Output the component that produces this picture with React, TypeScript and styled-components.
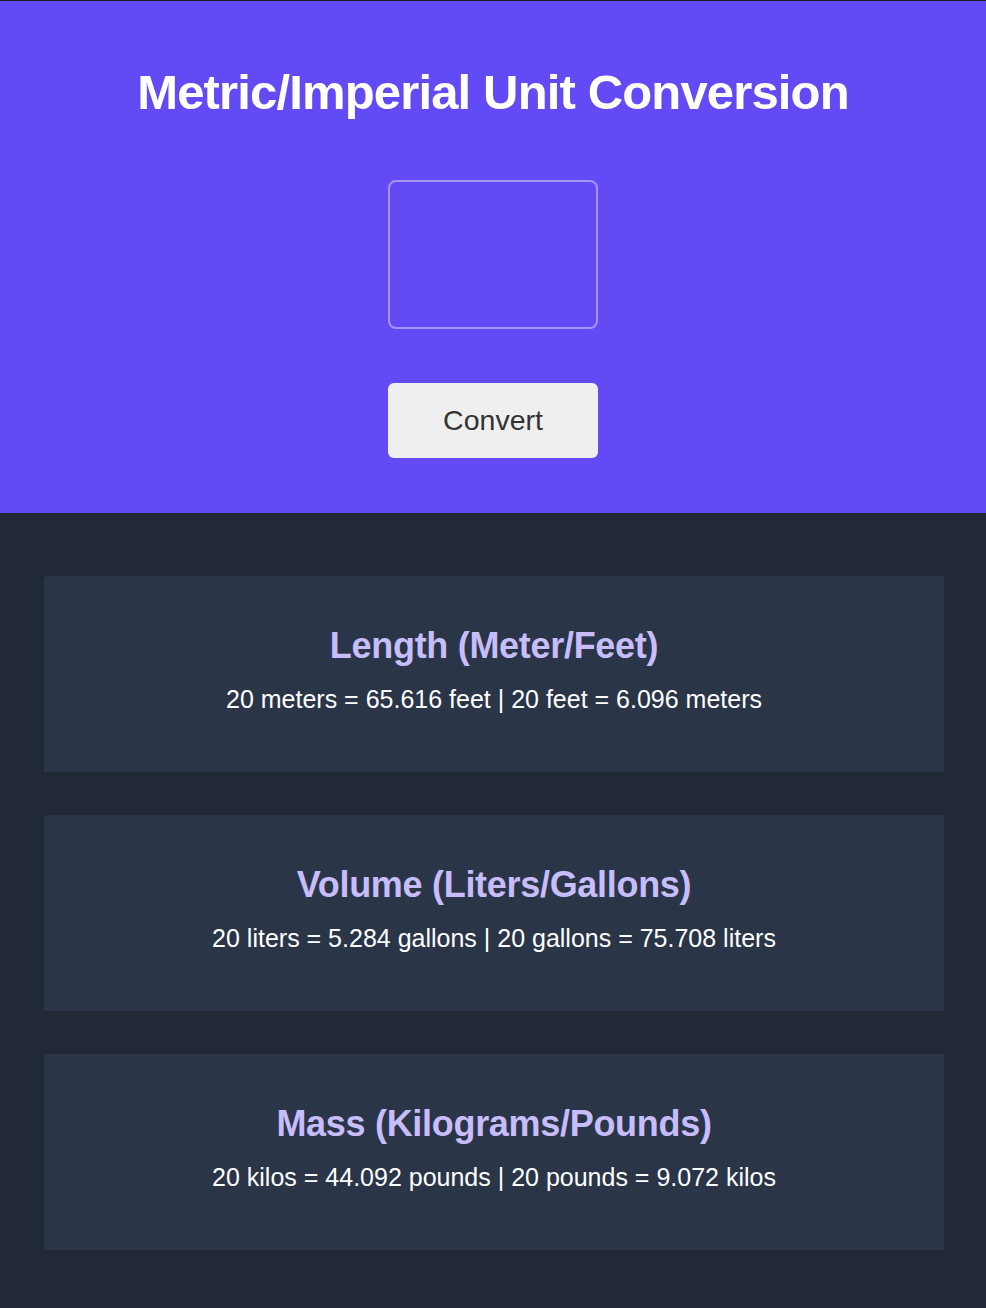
import React, { useState } from "react";
import styled, { createGlobalStyle } from "styled-components";

const GlobalStyle = createGlobalStyle`
  html, body {
    margin: 0;
    padding: 0;
    background: #212936;
    font-family: "Liberation Sans", Arial, sans-serif;
  }
`;

const Page = styled.div`
  min-height: 1308px;
  display: flex;
  flex-direction: column;
  border-top: 1px solid #1c1c24;
  background: #212936;
`;

const Header = styled.header`
  background: #624bf4;
  height: 512px;
  display: flex;
  flex-direction: column;
  align-items: center;
  box-sizing: border-box;
  padding-top: 60px;
`;

const Title = styled.h1`
  margin: 0;
  color: #ffffff;
  font-size: 49px;
  font-weight: 700;
  letter-spacing: -0.85px;
  line-height: 62px;
`;

const NumberInput = styled.input`
  margin-top: 57px;
  width: 210px;
  height: 149px;
  box-sizing: border-box;
  background: transparent;
  border: 2px solid #a893f9;
  border-radius: 8px;
  outline: none;
  color: #fff;
  font-size: 40px;
  text-align: center;
  font-family: inherit;
`;

const ConvertButton = styled.button`
  margin-top: 54px;
  width: 210px;
  height: 75px;
  border: none;
  border-radius: 6px;
  background: #efefef;
  color: #333333;
  font-family: "Liberation Sans", Arial, sans-serif;
  font-size: 28.5px;
  cursor: pointer;
`;

const Results = styled.main`
  display: flex;
  flex-direction: column;
  gap: 43px;
  padding: 63px 42px 0 44px;
`;

const Card = styled.section`
  background: #2b3548;
  height: 196px;
  border-top-left-radius: 4px;
  display: flex;
  flex-direction: column;
  align-items: center;
  box-sizing: border-box;
  padding-top: 48px;
`;

const CardTitle = styled.h2`
  margin: 0;
  color: #c8bdfb;
  font-size: 36px;
  font-weight: 700;
  letter-spacing: -0.3px;
  line-height: 44px;
`;

const CardText = styled.p`
  margin: 16px 0 0;
  color: #ffffff;
  font-size: 25px;
  letter-spacing: 0;
  line-height: 30px;
`;

const fmt = (n: number) => n.toFixed(3);

export default function App() {
  const [value, setValue] = useState("");
  const [num, setNum] = useState(20);

  const sections = [
    {
      title: "Length (Meter/Feet)",
      text: `${num} meters = ${fmt(num * 3.2808)} feet | ${num} feet = ${fmt(num * 0.3048)} meters`,
    },
    {
      title: "Volume (Liters/Gallons)",
      text: `${num} liters = ${fmt(num * 0.2642)} gallons | ${num} gallons = ${fmt(num * 3.7854)} liters`,
    },
    {
      title: "Mass (Kilograms/Pounds)",
      text: `${num} kilos = ${fmt(num * 2.2046)} pounds | ${num} pounds = ${fmt(num * 0.4536)} kilos`,
    },
  ];

  return (
    <Page>
      <GlobalStyle />
      <Header>
        <Title>Metric/Imperial Unit Conversion</Title>
        <NumberInput
          type="text"
          value={value}
          onChange={(e) => setValue(e.target.value)}
        />
        <ConvertButton
          onClick={() => {
            const n = parseFloat(value);
            if (!isNaN(n)) setNum(n);
          }}
        >
          Convert
        </ConvertButton>
      </Header>
      <Results>
        {sections.map((s) => (
          <Card key={s.title}>
            <CardTitle>{s.title}</CardTitle>
            <CardText>{s.text}</CardText>
          </Card>
        ))}
      </Results>
    </Page>
  );
}
